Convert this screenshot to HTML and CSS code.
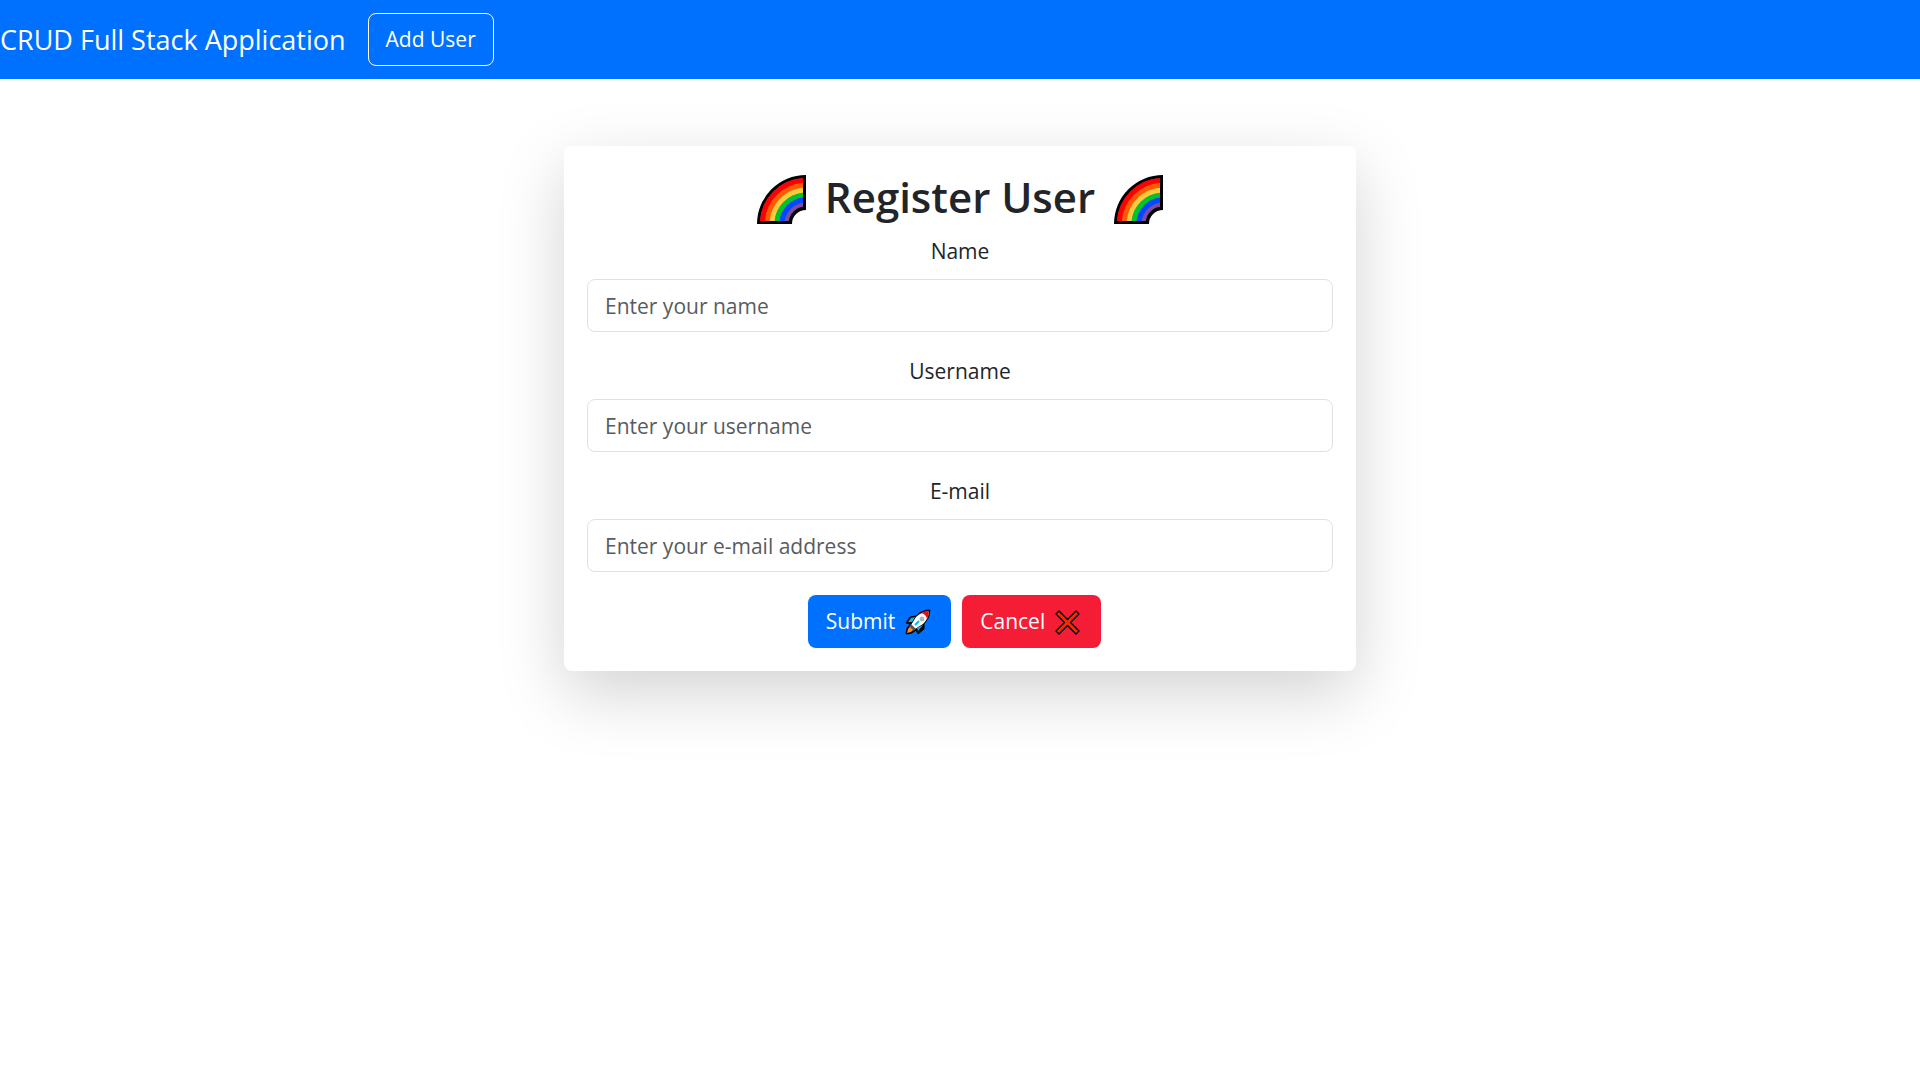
FILE: index.html
```html
<!DOCTYPE html>
<html lang="en">
<head>
<meta charset="utf-8">
<meta name="viewport" content="width=device-width, initial-scale=1">
<title>CRUD Full Stack Application</title>
<link rel="stylesheet" href="styles.css">
</head>
<body>
<svg class="defs" aria-hidden="true">
  <clipPath id="bands"><path d="M0 0H46V46H0Z"/></clipPath>
  <symbol id="rainbow" viewBox="0 0 49 49">
    <path d="M0 49A49 49 0 0 1 49 0V35A14 14 0 0 0 35 49Z" fill="#000"/>
    <path d="M3 46A46 46 0 0 1 46 3V31.800A17 17 0 0 0 31.800 46Z" fill="#7d4ba6"/>
    <g fill="none" stroke-width="5.200" clip-path="url(#bands)">
      <circle cx="49" cy="49" r="43.500" stroke="#f00"/>
      <circle cx="49" cy="49" r="38.500" stroke="#ff5a00"/>
      <circle cx="49" cy="49" r="33.700" stroke="#ffc83d"/>
      <circle cx="49" cy="49" r="28.900" stroke="#00c42c"/>
      <circle cx="49" cy="49" r="24" stroke="#0048ff"/>
    </g>
  </symbol>
</svg>
<nav class="navbar">
  <a class="brand" href="#">CRUD Full Stack Application</a>
  <a class="btn btn-outline" href="#">Add User</a>
</nav>
<main class="container">
  <form class="card">
    <h2 class="title">
      <svg class="rainbow" aria-hidden="true"><use href="#rainbow"/></svg>
      <span>Register User</span>
      <svg class="rainbow" aria-hidden="true"><use href="#rainbow"/></svg>
    </h2>
    <div class="field">
      <label for="name">Name</label>
      <input id="name" name="name" type="text" placeholder="Enter your name">
    </div>
    <div class="field">
      <label for="username">Username</label>
      <input id="username" name="username" type="text" placeholder="Enter your username">
    </div>
    <div class="field">
      <label for="email">E-mail</label>
      <input id="email" name="email" type="text" placeholder="Enter your e-mail address">
    </div>
    <div class="actions">
      <button class="btn btn-primary" type="submit">Submit
        <svg class="icon" viewBox="0 0 30 30" aria-hidden="true">
          <path d="M27 3Q18 3 13 9L7 10L3 16L7 17L4 21L3 27L9 26L13 23L15 27L21 22L21 17Q27 11 27 3Z" fill="#000" stroke="#000" stroke-width="1" stroke-linejoin="round"/>
          <path d="M8 11L12 10L9 15L5 15ZM20 18L15 24L14 21Z" fill="#00b7ef"/>
          <path d="M26 4Q18 5 13 10L8 18L12 22L20 17Q26 11 26 4Z" fill="#fff"/>
          <path d="M26 4Q22 4 18 6Q23 7 24 12Q26 8 26 4Z" fill="#e30b18"/>
          <path d="M8 17L13 22L10 24L6 20Z" fill="#555"/>
          <path d="M7 20L10 23L8 25L4 26L5 22Z" fill="#ff8c1a"/>
          <circle cx="19" cy="12" r="2.500" fill="#b4b4b4"/>
          <path d="M12 18L16 14" stroke="#00b7ef" stroke-width="2"/>
        </svg>
      </button>
      <a class="btn btn-danger" href="#">Cancel
        <svg class="icon" viewBox="0 0 30 30" aria-hidden="true">
          <path d="M6 4L14.500 12.500L23 4L26 7L17.500 15.500L26 24L23 27L14.500 18.500L6 27L3 24L11.500 15.500L3 7Z" fill="#ff2600" stroke="#000" stroke-width="1.300" stroke-linejoin="round"/>
        </svg>
      </a>
    </div>
  </form>
</main>
</body>
</html>
```
FILE: styles.css
```css
*, *::before, *::after { box-sizing: border-box; }

body {
  min-height: 100vh;
  margin: 0;
  background: #fff;
  color: #212529;
  font-family: "Segoe UI", "Open Sans", "Noto Sans", sans-serif;
  font-size: 21px;
  line-height: 33px;
}

.defs { position: absolute; width: 0; height: 0; }

.navbar {
  display: flex;
  align-items: center;
  gap: 22px;
  padding: 13px 0;
  background: #0070ff;
}

.brand {
  color: #fff;
  font-size: 27px;
  text-decoration: none;
}

.btn {
  display: inline-flex;
  align-items: center;
  gap: 8px;
  padding: 9px 17px;
  border: 1px solid transparent;
  border-radius: 8px;
  color: #fff;
  font: inherit;
  text-decoration: none;
  white-space: nowrap;
  cursor: pointer;
}

.btn-outline { border-color: #fff; }
.btn-primary { background: #0070ff; }
.btn-danger { background: #f51c36; }

.icon { width: 30px; height: 30px; }

.container { padding: 67px 16px 134px; }

.card {
  max-width: 792px;
  margin: 0 auto;
  padding: 23px;
  border-radius: 8px;
  background: #fff;
  box-shadow: 0 22px 67px rgba(0, 0, 0, 0.175);
  text-align: center;
}

.title {
  display: flex;
  align-items: flex-end;
  justify-content: center;
  gap: 19px;
  margin: 0 0 11px;
  font-size: 42px;
  font-weight: 600;
  line-height: 55px;
}

.rainbow { width: 49px; height: 49px; }

.field {
  display: flex;
  flex-direction: column;
  align-items: center;
  gap: 11px;
  margin-bottom: 23px;
}

.field input {
  width: 100%;
  height: 53px;
  padding: 8px 17px;
  border: 1px solid #dee2e6;
  border-radius: 8px;
  background: #fff;
  color: inherit;
  font: inherit;
}

.field input::placeholder { color: #595c5f; opacity: 1; }

.actions {
  display: flex;
  justify-content: center;
  gap: 11px;
  padding-right: 11px;
}
```
